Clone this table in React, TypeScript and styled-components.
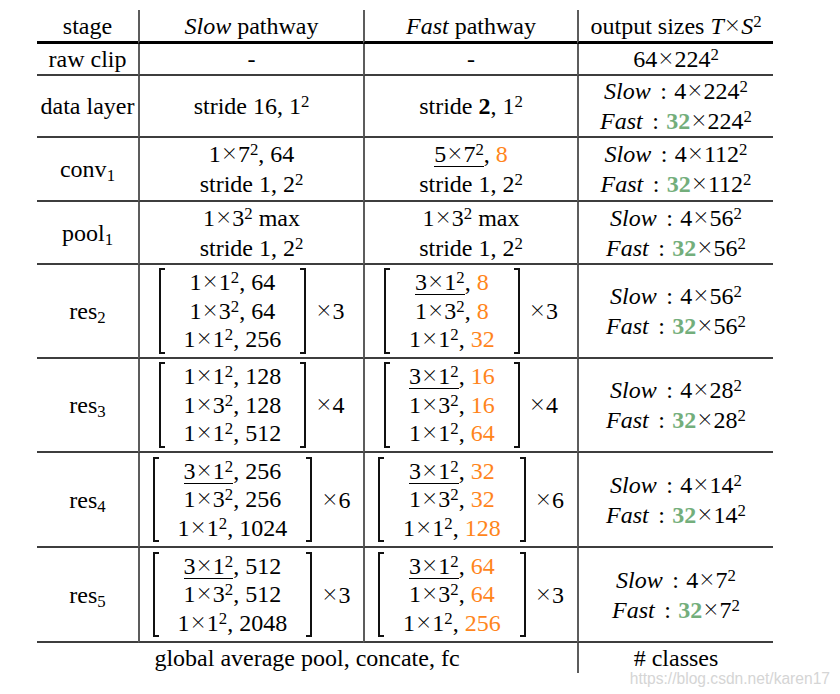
import React from 'react';
import styled, { createGlobalStyle } from 'styled-components';

const Global = createGlobalStyle`
  html, body { margin: 0; padding: 0; background: #fff; }
  body { font-family: "Liberation Serif", "Times New Roman", serif; color: #000; }
`;

const Page = styled.div`
  position: relative;
  width: 840px;
  height: 694px;
  padding: 10px 0 0 37px;
  box-sizing: border-box;
`;

const Table = styled.div`
  display: grid;
  grid-template-columns: 101px 225px 214px 196px;
  grid-template-rows: 34px 32px 62px 64px 63px 94px 94px 95px 95px 30px;
  font-size: 24px;
`;

type Line = 'thick' | 'thin' | 'none';

const Cell = styled.div<{ $left?: boolean; $bottom?: Line; $span?: number }>`
  box-sizing: border-box;
  display: flex;
  flex-direction: column;
  align-items: center;
  justify-content: center;
  text-align: center;
  white-space: nowrap;
  line-height: 30px;
  grid-column: span ${(p) => p.$span ?? 1};
  border-left: ${(p) => (p.$left ? '2px solid #5c5c5c' : 'none')};
  border-bottom: ${(p) =>
    p.$bottom === 'thick' ? '3px solid #000' : p.$bottom === 'none' ? 'none' : '2px solid #3e3e3e'};
`;

const Sup = styled.sup`
  font-size: 0.7em;
  vertical-align: 0.4em;
  line-height: 0;
`;

const Sub = styled.sub`
  font-size: 0.7em;
  vertical-align: -0.22em;
  line-height: 0;
`;

const It = styled.i`
  font-style: italic;
`;

const Bold = styled.b`
  font-weight: bold;
`;

const Orange = styled.span`
  color: #ff851b;
`;

const Green = styled.b`
  font-weight: bold;
  color: #73ae7b;
`;

const Under = styled.span`
  display: inline-block;
  line-height: 24px;
  border-bottom: 1px solid #000;
`;

const Times = styled.span`
  font-family: "Lato", "Liberation Serif", serif;
  font-weight: 300;
  font-style: normal;
  font-size: 1.06em;
  line-height: 0;
  margin: 0 0.05em;
`;

const Colon = styled.span`
  margin: 0 0.3em 0 0.4em;
`;

const Group = styled.div`
  display: flex;
  align-items: center;
`;

const Bracketed = styled.div`
  display: flex;
  align-items: stretch;
`;

const Brk = styled.span<{ $side: 'l' | 'r' }>`
  width: 6px;
  box-sizing: border-box;
  border-top: 2px solid #111;
  border-bottom: 2px solid #111;
  border-${(p) => (p.$side === 'l' ? 'left' : 'right')}: 2px solid #111;
`;

const Matrix = styled.div`
  display: flex;
  flex-direction: column;
  align-items: center;
  padding: 0 19px;
  line-height: 28.5px;
`;

const Repeat = styled.span`
  margin-left: 9px;
`;

const Watermark = styled.div`
  position: absolute;
  right: 10px;
  bottom: 7px;
  font-family: "Liberation Sans", Arial, sans-serif;
  font-size: 15.6px;
  line-height: 16px;
  color: #d5d5d5;
`;

const X = () => <Times>×</Times>;

const Kernel = ({ t, s, u }: { t: number; s: number; u?: boolean }) => {
  const inner = (
    <>
      {t}
      <X />
      {s}
      <Sup>2</Sup>
    </>
  );
  return u ? <Under>{inner}</Under> : inner;
};

type Row = { t: number; s: number; u?: boolean; c: number };

const Block = ({ rows, rep, fast }: { rows: Row[]; rep: number; fast?: boolean }) => (
  <Group>
    <Bracketed>
      <Brk $side="l" />
      <Matrix>
        {rows.map((r, i) => (
          <div key={i}>
            <Kernel t={r.t} s={r.s} u={r.u} />, {fast ? <Orange>{r.c}</Orange> : r.c}
          </div>
        ))}
      </Matrix>
      <Brk $side="r" />
    </Bracketed>
    <Repeat>
      <X />
      {rep}
    </Repeat>
  </Group>
);

const Output = ({ t, s }: { t: number; s: number }) => (
  <>
    <div>
      <It>Slow</It>
      <Colon>:</Colon>4<X />
      {s}
      <Sup>2</Sup>
    </div>
    <div>
      <It>Fast</It>
      <Colon>:</Colon>
      <Green>{t}</Green>
      <X />
      {s}
      <Sup>2</Sup>
    </div>
  </>
);

const resStages = [
  {
    n: 2,
    rep: 3,
    out: 56,
    slow: [
      { t: 1, s: 1, c: 64 },
      { t: 1, s: 3, c: 64 },
      { t: 1, s: 1, c: 256 },
    ],
    fast: [
      { t: 3, s: 1, u: true, c: 8 },
      { t: 1, s: 3, c: 8 },
      { t: 1, s: 1, c: 32 },
    ],
  },
  {
    n: 3,
    rep: 4,
    out: 28,
    slow: [
      { t: 1, s: 1, c: 128 },
      { t: 1, s: 3, c: 128 },
      { t: 1, s: 1, c: 512 },
    ],
    fast: [
      { t: 3, s: 1, u: true, c: 16 },
      { t: 1, s: 3, c: 16 },
      { t: 1, s: 1, c: 64 },
    ],
  },
  {
    n: 4,
    rep: 6,
    out: 14,
    slow: [
      { t: 3, s: 1, u: true, c: 256 },
      { t: 1, s: 3, c: 256 },
      { t: 1, s: 1, c: 1024 },
    ],
    fast: [
      { t: 3, s: 1, u: true, c: 32 },
      { t: 1, s: 3, c: 32 },
      { t: 1, s: 1, c: 128 },
    ],
  },
  {
    n: 5,
    rep: 3,
    out: 7,
    slow: [
      { t: 3, s: 1, u: true, c: 512 },
      { t: 1, s: 3, c: 512 },
      { t: 1, s: 1, c: 2048 },
    ],
    fast: [
      { t: 3, s: 1, u: true, c: 64 },
      { t: 1, s: 3, c: 64 },
      { t: 1, s: 1, c: 256 },
    ],
  },
];

export default function App() {
  return (
    <>
      <Global />
      <Page>
        <Table>
          {/* header */}
          <Cell $bottom="thick">stage</Cell>
          <Cell $left $bottom="thick">
            <span>
              <It>Slow</It> pathway
            </span>
          </Cell>
          <Cell $left $bottom="thick">
            <span>
              <It>Fast</It> pathway
            </span>
          </Cell>
          <Cell $left $bottom="thick">
            <span>
              output sizes <It>T</It>
              <X />
              <It>S</It>
              <Sup>2</Sup>
            </span>
          </Cell>

          {/* raw clip */}
          <Cell>raw clip</Cell>
          <Cell $left>-</Cell>
          <Cell $left>-</Cell>
          <Cell $left>
            <span>
              64
              <X />
              224<Sup>2</Sup>
            </span>
          </Cell>

          {/* data layer */}
          <Cell>data layer</Cell>
          <Cell $left>
            <span>
              stride 16, 1<Sup>2</Sup>
            </span>
          </Cell>
          <Cell $left>
            <span>
              stride <Bold>2</Bold>, 1<Sup>2</Sup>
            </span>
          </Cell>
          <Cell $left>
            <Output t={32} s={224} />
          </Cell>

          {/* conv1 */}
          <Cell>
            <span>
              conv<Sub>1</Sub>
            </span>
          </Cell>
          <Cell $left>
            <div>
              <Kernel t={1} s={7} />, 64
            </div>
            <div>
              stride 1, 2<Sup>2</Sup>
            </div>
          </Cell>
          <Cell $left>
            <div>
              <Kernel t={5} s={7} u />, <Orange>8</Orange>
            </div>
            <div>
              stride 1, 2<Sup>2</Sup>
            </div>
          </Cell>
          <Cell $left>
            <Output t={32} s={112} />
          </Cell>

          {/* pool1 */}
          <Cell>
            <span>
              pool<Sub>1</Sub>
            </span>
          </Cell>
          <Cell $left>
            <div>
              <Kernel t={1} s={3} /> max
            </div>
            <div>
              stride 1, 2<Sup>2</Sup>
            </div>
          </Cell>
          <Cell $left>
            <div>
              <Kernel t={1} s={3} /> max
            </div>
            <div>
              stride 1, 2<Sup>2</Sup>
            </div>
          </Cell>
          <Cell $left>
            <Output t={32} s={56} />
          </Cell>

          {resStages.map((st) => (
            <React.Fragment key={st.n}>
              <Cell>
                <span>
                  res<Sub>{st.n}</Sub>
                </span>
              </Cell>
              <Cell $left>
                <Block rows={st.slow} rep={st.rep} />
              </Cell>
              <Cell $left>
                <Block rows={st.fast} rep={st.rep} fast />
              </Cell>
              <Cell $left>
                <Output t={32} s={st.out} />
              </Cell>
            </React.Fragment>
          ))}

          {/* final row */}
          <Cell $span={3} $bottom="none">
            global average pool, concate, fc
          </Cell>
          <Cell $left $bottom="none">
            # classes
          </Cell>
        </Table>
        <Watermark>https://blog.csdn.net/karen17</Watermark>
      </Page>
    </>
  );
}
